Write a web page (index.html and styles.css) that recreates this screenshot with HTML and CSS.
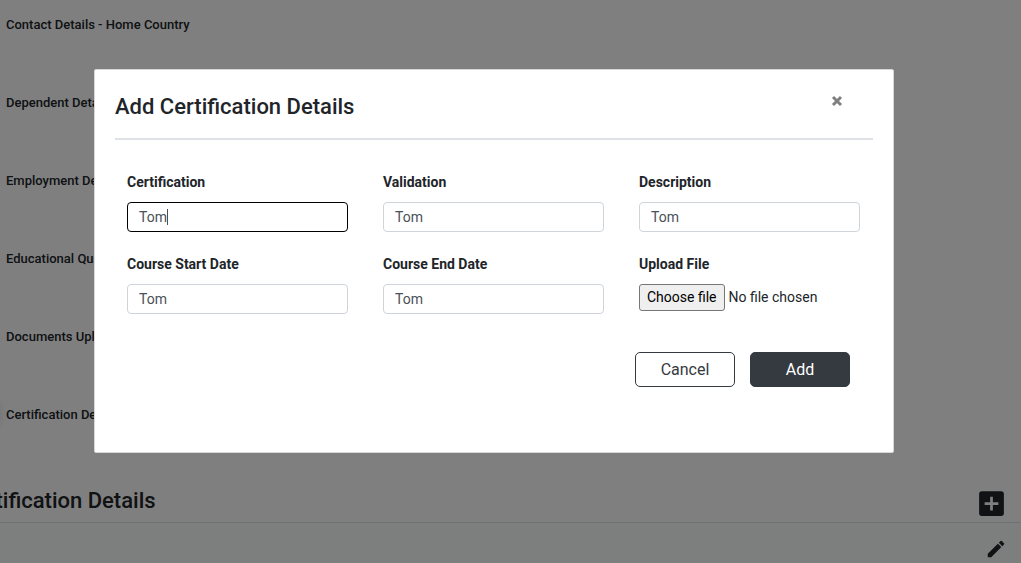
FILE: index.html
```html
<!DOCTYPE html>
<html lang="en">
<head>
<meta charset="utf-8">
<title>Certification Details</title>
<link rel="stylesheet" href="styles.css">
</head>
<body>
<main class="page">
  <ol class="steps">
    <li class="step">Contact Details - Home Country</li>
    <li class="step">Dependent Details</li>
    <li class="step">Employment Details</li>
    <li class="step">Educational Qualification</li>
    <li class="step">Documents Upload</li>
    <li class="step step-current">Certification Details</li>
  </ol>
  <header class="section-head">
    <h2 class="section-title">Certification Details</h2>
    <button class="icon-button" type="button" aria-label="Add certification">
      <svg width="33" height="33" viewBox="0 0 24 24" aria-hidden="true"><path fill="#212529" d="M19 3H5a2 2 0 0 0-2 2v14a2 2 0 0 0 2 2h14a2 2 0 0 0 2-2V5a2 2 0 0 0-2-2zm-2 10h-4v4h-2v-4H7v-2h4V7h2v4h4v2z"/></svg>
    </button>
  </header>
  <div class="record">
    <button class="icon-button" type="button" aria-label="Edit certification">
      <svg width="22" height="22" viewBox="0 0 24 24" aria-hidden="true"><path fill="#212529" d="M3 17.250V21h3.750L17.810 9.940l-3.750-3.750L3 17.250zM20.710 7.040a1 1 0 0 0 0-1.410l-2.340-2.340a1 1 0 0 0-1.410 0l-1.830 1.830 3.750 3.750 1.830-1.830z"/></svg>
    </button>
  </div>
</main>

<div class="overlay">
  <section class="dialog" role="dialog" aria-modal="true" aria-labelledby="dialog-title">
    <header class="dialog-head">
      <h1 class="dialog-title" id="dialog-title">Add Certification Details</h1>
      <button class="close" type="button" aria-label="Close">
        <svg width="12" height="12" viewBox="0 0 12 12" aria-hidden="true"><path d="M2 2l8 8M10 2l-8 8" stroke="#808080" stroke-width="3"/></svg>
      </button>
    </header>
    <form class="form">
      <div class="fields">
        <div class="field">
          <label class="label" for="certification">Certification</label>
          <div class="active-box"><input class="input input-active" id="certification" type="text" value="Tom"></div>
        </div>
        <div class="field">
          <label class="label" for="validation">Validation</label>
          <input class="input" id="validation" type="text" value="Tom">
        </div>
        <div class="field">
          <label class="label" for="description">Description</label>
          <input class="input" id="description" type="text" value="Tom">
        </div>
        <div class="field">
          <label class="label" for="start">Course Start Date</label>
          <input class="input" id="start" type="text" value="Tom">
        </div>
        <div class="field">
          <label class="label" for="end">Course End Date</label>
          <input class="input" id="end" type="text" value="Tom">
        </div>
        <div class="field">
          <label class="label" for="upload">Upload File</label>
          <div class="file">
            <input class="file-input" id="upload" type="file">
            <label class="file-button" for="upload">Choose file</label>
            <span>No file chosen</span>
          </div>
        </div>
      </div>
      <div class="actions">
        <button class="button" type="button">Cancel</button>
        <button class="button button-primary" type="button">Add</button>
      </div>
    </form>
  </section>
</div>
</body>
</html>
```
FILE: styles.css
```css
* {
  box-sizing: border-box;
}

body {
  margin: 0;
  overflow: hidden;
  background: #fff;
  color: #212529;
  font-family: Roboto, sans-serif;
}

.steps {
  margin: 0;
  padding: 0 0 0 6px;
  list-style: none;
}

.step {
  height: 78px;
  padding-top: 15px;
  font-size: 13px;
  font-weight: 500;
  line-height: 20px;
}

.step-current {
  position: relative;
}

.step-current::before {
  content: "";
  position: absolute;
  left: -38px;
  top: 10px;
  width: 28px;
  height: 28px;
  border-radius: 50%;
  box-shadow: 0 0 12px 2px rgba(0, 0, 0, 0.2);
}

.section-head {
  display: flex;
  align-items: center;
  justify-content: space-between;
  height: 55px;
  margin-left: -39px;
  padding: 17px 13px 0 0;
  border-bottom: 1px solid #dee2e6;
}

.section-title {
  margin: 0;
  padding-bottom: 5px;
  font-size: 22px;
  font-weight: 500;
  line-height: 28px;
}

.icon-button {
  display: flex;
  padding: 0;
  border: 0;
  background: none;
}

.record {
  display: flex;
  justify-content: flex-end;
  height: 40px;
  padding: 15px 14px 0 0;
  background: #f8fefb;
}

.overlay {
  position: fixed;
  inset: 0;
  display: flex;
  justify-content: center;
  align-items: flex-start;
  padding: 69px 33px 0 0;
  background: rgba(0, 0, 0, 0.5);
}

.dialog {
  width: 800px;
  max-width: 100%;
  padding: 20px 20px 65px;
  border: 1px solid #d7d7d7;
  border-radius: 2px;
  background: #fff;
}

.dialog-head {
  display: flex;
  justify-content: space-between;
  align-items: flex-start;
  padding: 3px 30px 17px 0;
  border-bottom: 2px solid #dee2e6;
}

.dialog-title {
  margin: 0;
  font-size: 22px;
  font-weight: 500;
  line-height: 28px;
}

.close {
  display: flex;
  margin-top: 2px;
  padding: 0;
  border: 0;
  background: none;
}

.form {
  padding: 32px 13px 0 12px;
}

.fields {
  display: grid;
  grid-template-columns: repeat(3, 1fr);
  gap: 20px 35px;
}

.field {
  height: 62px;
}

.label {
  display: block;
  margin-bottom: 10px;
  font-size: 14px;
  font-weight: 700;
  line-height: 20px;
}

.input {
  display: block;
  width: 100%;
  height: 30px;
  padding: 0 11px;
  border: 1px solid #ced4da;
  border-radius: 4px;
  background: #fff;
  color: #495057;
  font: 14px/20px Roboto, sans-serif;
}

.active-box {
  position: relative;
}

.active-box::after {
  content: "";
  position: absolute;
  left: 40px;
  top: 7px;
  width: 1px;
  height: 16px;
  background: #495057;
}

.input-active {
  border-color: #000;
}

.file {
  display: flex;
  align-items: baseline;
  gap: 4px;
  position: relative;
  font-size: 14px;
  line-height: 20px;
}

.file-input {
  position: absolute;
  width: 1px;
  height: 1px;
  opacity: 0;
}

.file-button {
  padding: 2px 7px 3px;
  border: 1px solid #767676;
  border-radius: 3px;
  background: #efefef;
  color: #000;
}

.actions {
  display: flex;
  justify-content: flex-end;
  gap: 15px;
  padding: 36px 10px 0 0;
}

.button {
  width: 100px;
  height: 35px;
  padding: 0;
  border: 1px solid #343a40;
  border-radius: 5px;
  background: #fff;
  color: #343a40;
  font: 16px/24px Roboto, sans-serif;
}

.button-primary {
  background: #343a40;
  color: #fff;
}
```
